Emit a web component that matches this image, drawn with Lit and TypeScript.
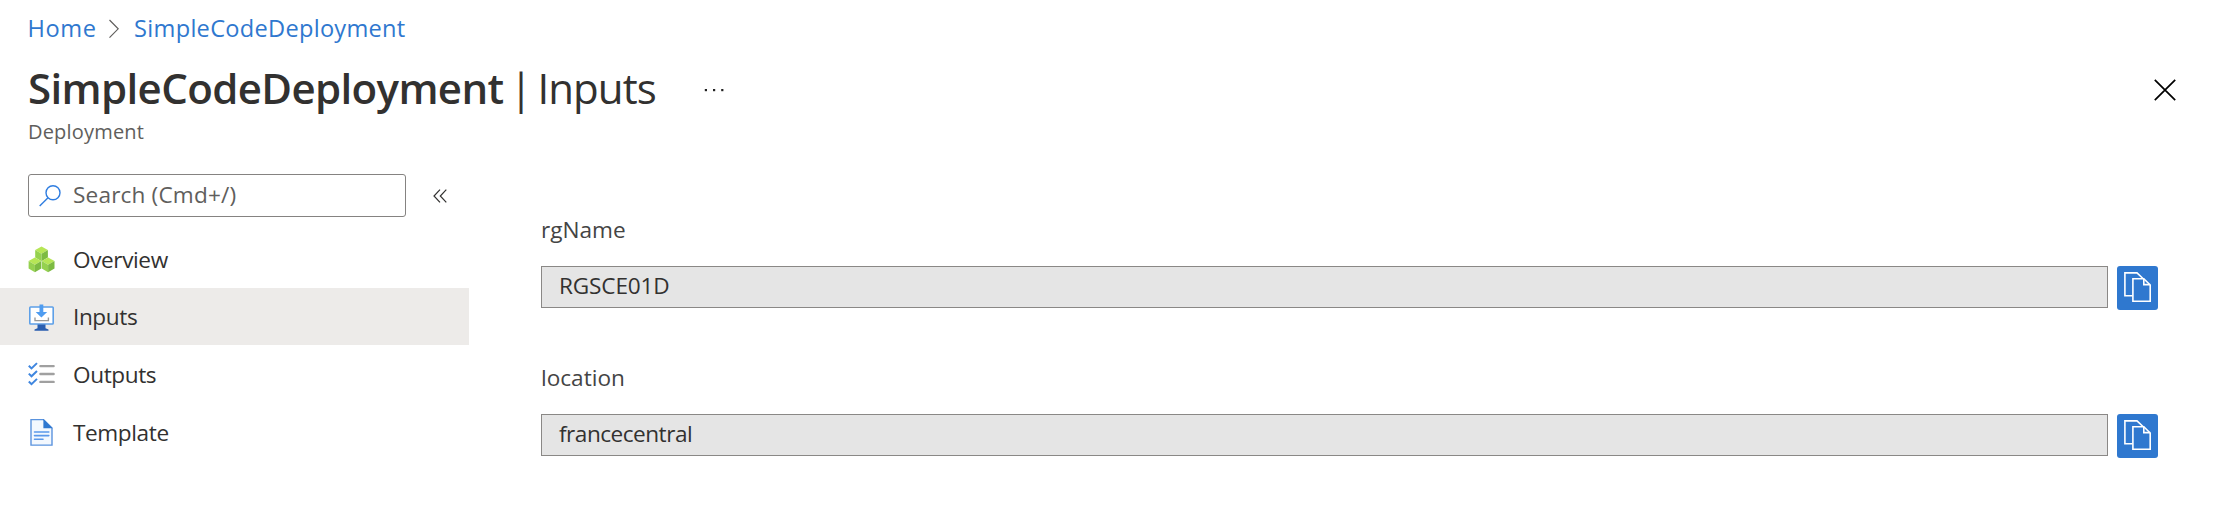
import { LitElement, html, svg, css } from "lit";
import { customElement, property } from "lit/decorators.js";
import { classMap } from "lit/directives/class-map.js";

const icons: Record<string, unknown> = {
  Overview: html`<svg width="28" height="28" viewBox="0 0 28 28">
    ${[[7.2, 1.6], [0.6, 12.6], [13.8, 12.6]].map(
      ([x, y]) => svg`<g transform="translate(${x} ${y})">
        <path d="M0 3.5L6.3 0L12.7 3.5L6.3 7.2Z" fill="#b6e656"/>
        <path d="M0 3.5L6.3 7.2V14.6L0 11Z" fill="#95d14f"/>
        <path d="M12.7 3.5L6.3 7.2V14.6L12.7 11Z" fill="#7dbb42"/>
      </g>`
    )}
  </svg>`,
  Inputs: html`<svg width="28" height="28" viewBox="0 0 28 28">
    <rect x="1.8" y="4" width="23.4" height="17" rx="0.8" fill="#fff" stroke="#5ea0e8" stroke-width="1.6"/>
    <path d="M9.5 21.4h8v3.8l3 1.2v1.3H6.5v-1.3l3-1.2Z" fill="#2b5fb0"/>
    <path d="M11.5 1.6h3.8v7.4h3.9L13.4 14.6L7.7 9H11.5Z" fill="#4f9cf0"/>
    <path d="M7 14.4V17.6H20.4V14.4" fill="none" stroke="#999" stroke-width="1.4"/>
  </svg>`,
  Outputs: html`<svg width="28" height="28" viewBox="0 0 28 28">
    ${[6.1, 14, 21.9].map(
      (y) => svg`<path d="M0.8 ${y - 0.4}L3.5 ${y + 2.3}L9 ${y - 3}" fill="none" stroke="#3f86df" stroke-width="2"/>
        <path d="M12.4 ${y}H25.6" stroke="#a0a0a0" stroke-width="2.4" stroke-linecap="round"/>`
    )}
  </svg>`,
  Template: html`<svg width="28" height="28" viewBox="0 0 28 28">
    <path d="M3 1.6H15.5L24 10V27.1H3Z" fill="#f3f8fe" stroke="#5a93de" stroke-width="1.4"/>
    <path d="M15.4 1L24.7 10.2H15.4Z" fill="#2f78d0"/>
    <path d="M6.5 14H20.8M6.5 17.6H20.8M6.5 21.3H15" stroke="#5a98ea" stroke-width="1.6" stroke-linecap="round"/>
  </svg>`,
};

@customElement("value-field")
class ValueField extends LitElement {
  @property() label = "";
  @property() value = "";
  static styles = css`
    :host { display: block; color: #323130; }
    .label { height: 36px; line-height: 36px; margin-bottom: 18px; color: #444; }
    .line { display: flex; gap: 9px; align-items: flex-start; }
    .box {
      box-sizing: border-box; width: 1567px; height: 42px; line-height: 38px;
      border: 1px solid #8a8886; background: #e5e5e5; padding-left: 17px;
    }
    .code { letter-spacing: -0.15px; }
    .word { letter-spacing: -0.5px; }
    .copy {
      width: 41px; height: 44px; border: 0; padding: 0; border-radius: 3px;
      background: #2f78cf; display: block;
    }
    svg { display: block; }
  `;
  render() {
    const word = this.value === this.value.toLowerCase();
    return html`
      <div class="label"><span>${this.label}</span></div>
      <div class="line">
        <div class="box"><span class=${word ? "word" : "code"}>${this.value}</span></div>
        <button class="copy" aria-label="Copy">
          <svg width="41" height="44" viewBox="0 0 41 44" fill="none" stroke="#fff" stroke-width="1.6">
            <path d="M15.5 29.8H7.9V6.9H20L26 12.5"/>
            <path d="M15.9 12.7H26.8L33.2 19V35.2H15.9Z"/>
            <path d="M26.8 12.7V18.6H33.2"/>
          </svg>
        </button>
      </div>`;
  }
}

@customElement("app-root")
class AppRoot extends LitElement {
  static styles = css`
    :host {
      display: block; height: 516px; overflow: hidden; background: #fff; color: #323130;
      font: 22.6px "Open Sans", "Noto Sans", sans-serif;
    }
    svg { display: block; flex: none; }
    .crumbs {
      display: flex; align-items: center; height: 56px; padding-left: 27.5px;
      color: #2f78cf; font-size: 23.6px; letter-spacing: 0.28px;
    }
    .home { letter-spacing: 0.6px; }
    .sep { margin: 2px 15px 0 12.5px; }
    .head { display: flex; align-items: center; height: 63px; padding: 0 50px 0 28px; font-size: 42px; white-space: pre; }
    .name { font-weight: 600; letter-spacing: -0.63px; }
    .bar { margin: 0 5px 0 6px; }
    .page { letter-spacing: -0.95px; }
    .more { margin: 4px 0 0 48px; }
    .close { margin: 4px 0 0 auto; }
    .sub {
      height: 25px; line-height: 25px; padding-left: 28px; font-size: 20px;
      letter-spacing: 0.19px; color: #605e5c;
    }
    .body { display: flex; }
    .side { width: 469px; padding-top: 30px; }
    .tools { display: flex; align-items: center; padding-left: 28px; margin-bottom: 13.5px; }
    .search {
      box-sizing: border-box; display: flex; align-items: center; width: 378px; height: 43px;
      border: 1px solid #858381; border-radius: 3px; padding-left: 10px; gap: 12px; color: #605e5c;
      letter-spacing: 0.17px;
    }
    .hint { padding-bottom: 2px; }
    .fold { margin-left: 27px; }
    .items { display: flex; flex-direction: column; gap: 0.7px; letter-spacing: -0.4px; }
    .item { display: flex; align-items: center; height: 57px; padding-left: 28px; gap: 17px; }
    .on { background: #edebe9; }
    .main { padding: 68px 0 0 72px; display: flex; flex-direction: column; gap: 50px; }
  `;
  render() {
    return html`
      <nav class="crumbs">
        <span class="home">Home</span>
        <svg class="sep" width="10" height="20" viewBox="0 0 10 20" fill="none" stroke="#605e5c" stroke-width="1.2"><path d="M0.5 1L9.2 9.8L0.5 18.6"/></svg>
        <span>SimpleCodeDeployment</span>
      </nav>
      <header class="head"><span class="name">SimpleCodeDeployment</span><span class="bar">|</span><span class="page">Inputs</span>
        <svg class="more" width="22" height="4" viewBox="0 0 22 4" fill="#222"><rect x="0.8" y="1" width="2.2" height="2.2"/><rect x="9" y="1" width="2.2" height="2.2"/><rect x="17.2" y="1" width="2.2" height="2.2"/></svg>
        <svg class="close" width="22" height="22" viewBox="0 0 22 22" stroke="#000" stroke-width="1.7"><path d="M0.8 0.8L21.2 21.2M21.2 0.8L0.8 21.2"/></svg>
      </header>
      <div class="sub"><span>Deployment</span></div>
      <div class="body">
        <aside class="side">
          <div class="tools">
            <div class="search">
              <svg width="22" height="22" viewBox="0 0 22 22" fill="none" stroke="#2f7de0" stroke-width="1.4"><circle cx="14" cy="7.8" r="7"/><path d="M9 12.8L0.7 21"/></svg>
              <span class="hint">Search (Cmd+/)</span>
            </div>
            <svg class="fold" width="15" height="14" viewBox="0 0 15 14" fill="none" stroke="#323130" stroke-width="1.2"><path d="M7 0.6L1 7L7 13.4M13.3 0.6L7.3 7L13.3 13.4"/></svg>
          </div>
          <div class="items">
            ${["Overview", "Inputs", "Outputs", "Template"].map(
              (t) => html`<div class=${classMap({ item: true, on: t === "Inputs" })}>${icons[t]}<span>${t}</span></div>`
            )}
          </div>
        </aside>
        <main class="main">
          <value-field label="rgName" value="RGSCE01D"></value-field>
          <value-field label="location" value="francecentral"></value-field>
        </main>
      </div>`;
  }
}
